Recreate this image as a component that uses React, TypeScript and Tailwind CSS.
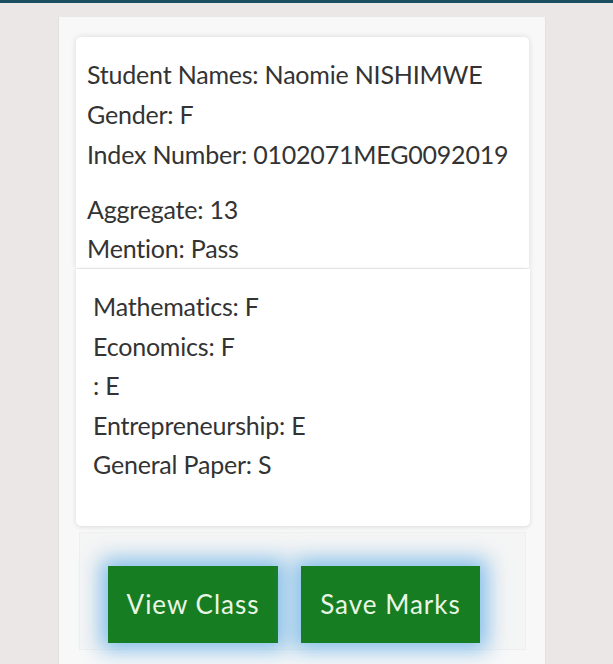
export default function App() {
  const info = ["Student Names: Naomie NISHIMWE", "Gender: F", "Index Number: 0102071MEG0092019"];
  const result = ["Aggregate: 13", "Mention: Pass"];
  const subjects = ["Mathematics: F", "Economics: F", ": E", "Entrepreneurship: E", "General Paper: S"];

  return (
    <div className="min-h-[664px] bg-[#ebe7e6] font-['Lato',sans-serif] text-[#333]">
      <div className="h-[3px] bg-[#1b4f5f]" />
      <div className="ml-[58px] mt-[14px] w-[488px] h-[647px] bg-[#f8f8f8] border-x border-[#e4e0df] pl-[17px] pr-[16px] pt-[20px] overflow-hidden">
        <div className="h-[231px] rounded-t-[5px] bg-white shadow-[0_0_6px_rgba(0,0,0,0.12)] px-[11px] pt-[17px] text-[25px] tracking-[-0.2px] overflow-hidden">
          {info.map((t) => (
            <div key={t} className="h-[40px] leading-[40px] whitespace-nowrap">
              {t}
            </div>
          ))}
          <div className="mt-[16px]">
            {result.map((t) => (
              <div key={t} className="h-[39px] leading-[39px]">
                {t}
              </div>
            ))}
          </div>
        </div>
        <div className="mt-[1px] h-[257px] w-[454px] rounded-b-[5px] bg-white shadow-[0_1px_5px_rgba(0,0,0,0.12)] px-[17px] pt-[18px] text-[25px] tracking-[-0.2px]">
          {subjects.map((t) => (
            <div key={t} className="h-[39.5px] leading-[39.5px]">
              {t}
            </div>
          ))}
        </div>
        <div className="mt-[6px] ml-[3px] w-[447px] h-[118px] bg-[#f5f5f5] border border-[#efefef] pl-[28px] pt-[33px] flex gap-[23px]">
          <button className="w-[170px] h-[77px] bg-[#177d22] text-[#eaf6e4] text-[26px] tracking-[1px] shadow-[0_0_20px_7px_rgba(100,175,230,0.8)]">
            View Class
          </button>
          <button className="w-[179px] h-[77px] bg-[#177d22] text-[#eaf6e4] text-[26px] tracking-[1px] shadow-[0_0_20px_7px_rgba(100,175,230,0.8)]">
            Save Marks
          </button>
        </div>
      </div>
    </div>
  );
}
